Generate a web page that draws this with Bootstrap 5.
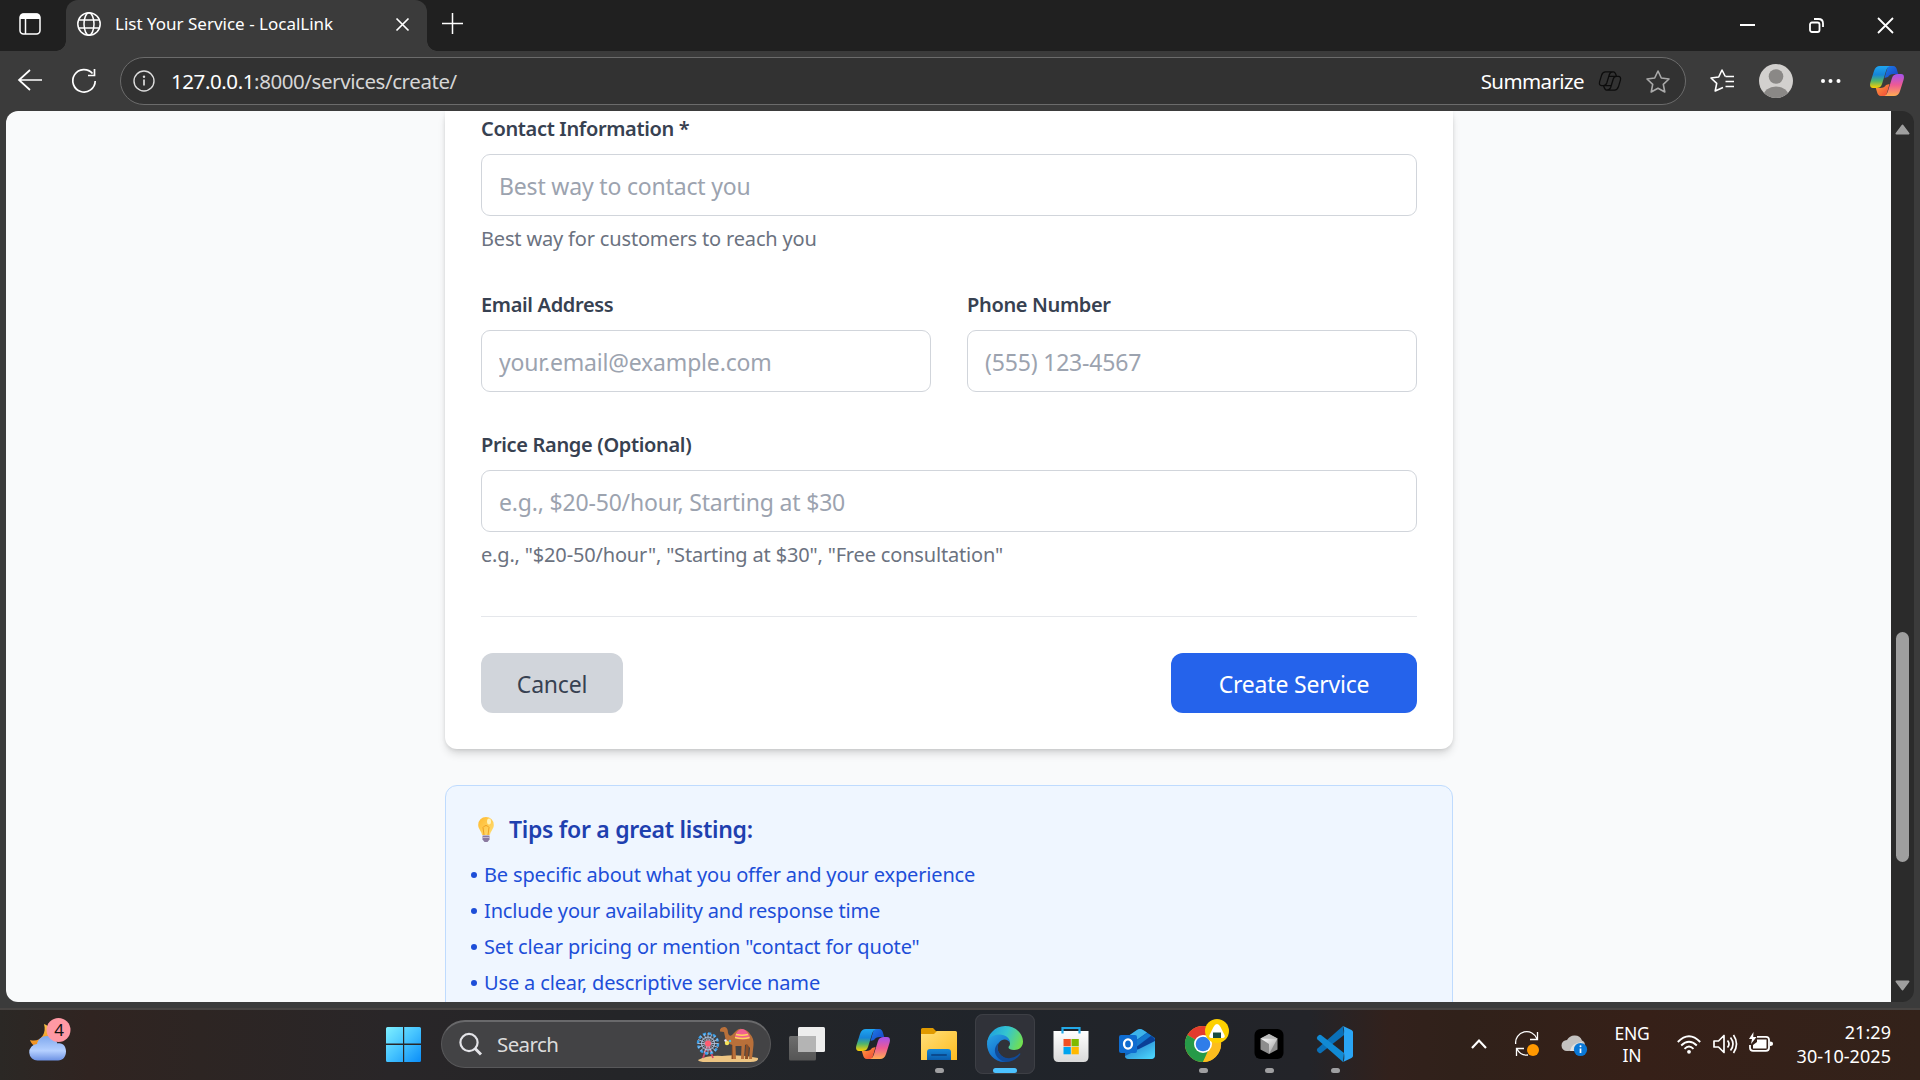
<!DOCTYPE html>
<html lang="en">
<head>
<meta charset="utf-8">
<title>List Your Service - LocalLink</title>
<link href="https://cdn.jsdelivr.net/npm/bootstrap@5.3.0/dist/css/bootstrap.min.css" rel="stylesheet">
<style>
body{width:1920px;height:1080px;overflow:hidden;background:#3b3b3b;font-family:"Noto Sans","Open Sans",sans-serif}
svg{display:block;flex:none;overflow:visible}
.tabstrip{height:51px;background:#202020;color:#fff}
.tabmenu{width:66px;padding:13px 0 0 19px}
.browser-tab{width:361px;height:51px;background:#3b3b3b;border-radius:12px 12px 0 0;padding:0 18px 3px 11px;position:relative}
.browser-tab::before,.browser-tab::after{content:"";position:absolute;bottom:0;width:10px;height:10px}
.browser-tab::before{left:-10px;background:radial-gradient(circle at 0 0,#202020 9.5px,#3b3b3b 10px)}
.browser-tab::after{right:-10px;background:radial-gradient(circle at 100% 0,#202020 9.5px,#3b3b3b 10px)}
.tabtitle{font-size:17px;margin-left:14px;letter-spacing:0;white-space:nowrap}
.toolbar{height:60px;color:#fff}
.urlbar{width:1566px;height:48px;margin:6px 0 0 24px;border:1px solid #6b6b6b;border-radius:24px;background:#323232;padding:0 15px 0 12px}
.urltext{font-size:20.5px;margin-left:16px;letter-spacing:-.42px;color:#d6d6d6}
.urltext b{font-weight:400;color:#fff}
.sumtext{font-size:20.5px;letter-spacing:-.6px}
.viewport{height:891px;margin:0 6px;border-radius:12px;overflow:hidden;background:#2b2b2b}
.page{width:1885px;height:891px;background:#f9fafb;overflow:hidden;padding-left:439px}
.formbox{width:1008px;background:#fff;border-radius:0 0 12px 12px;padding:1px 36px 36px;box-shadow:0 6px 9px -1.5px rgba(0,0,0,.12),0 3px 6px -3px rgba(0,0,0,.12),0 0 4px rgba(0,0,0,.06)}
.flabel{display:block;font-size:20px;line-height:34px;font-weight:600;color:#374151;margin:0 0 8px;letter-spacing:-.34px}
.finput.form-control{height:62px;font-size:23px;border:1px solid #d1d5db;border-radius:9px;padding:1px 17px 0 17px;letter-spacing:-.18px}
.finput::placeholder{color:#9ca3af}
.fhelp{font-size:20px;line-height:34px;color:#6b7280;margin-top:6px;letter-spacing:-.17px}
.gap-form{margin-bottom:32px}
.actions{border-top:1px solid #e5e7eb;padding-top:36px;margin-top:44px}
.actions .btn{height:60px;font-size:23px;border:0;border-radius:12px;padding:3px 0 0;letter-spacing:-.2px}
.b-cancel{width:142px;background:#d1d5db;color:#374151}
.b-create{width:246px;background:#2563eb;color:#fff}
.tips{width:1008px;height:300px;margin-top:36px;background:#eff6ff;border:1px solid #bfdbfe;border-radius:12px;padding:24px}
.tips h3{font-size:23px;line-height:38px;font-weight:600;color:#1e40af;margin:0 0 10px;letter-spacing:-.3px}
.tips li{font-size:20px;line-height:34px;margin-bottom:2px;color:#1d4ed8;letter-spacing:-.15px}
.tips li::before{content:"";display:inline-block;width:6px;height:6px;border-radius:50%;background:#1d4ed8;margin:0 7px 4px 1px}
.scrollcol{width:23px;padding:13px 0 11px}
.thumb{width:13px;height:230px;border-radius:7px;background:#9f9f9f;margin-top:497px}
.taskbar{height:72px;margin-top:6px;padding-bottom:2px;border-top:2px solid #484442;color:#fff;background:linear-gradient(90deg,#2b2825 0,#302421 90px,#2d2523 200px,#292628 390px,#242528 620px,#20242a 1000px,#232429 1310px,#32211c 1390px,#30211a 1460px,#362018 1640px,#33221a 1920px)}
.taskbar>*{flex:none}
.weather{width:60px;margin-left:18px}
.startbtn{width:60px;margin-left:295px}
.searchpill{width:330px;height:48px;margin:0 3px 0 8px;border-radius:24px;background:#434345;border:1px solid #58585a;border-top:2px solid #69696b;padding:0 10px 0 17px;color:#dcdcdc;font-size:20.5px;letter-spacing:-.6px}
.tile{width:60px;height:60px;margin:0 3px;border-radius:8px}
.tile.on{background:#303239;box-shadow:inset 0 0 0 1px #3d3f45}
.tray{font-size:17.5px;line-height:22px;letter-spacing:-.2px}
.clocktext{font-size:18px;line-height:24px;letter-spacing:.05px}
</style>
<script src="https://cdn.jsdelivr.net/npm/bootstrap@5.3.0/dist/js/bootstrap.bundle.min.js"></script>
</head>
<body class="d-flex flex-column">
<svg width="0" height="0" class="position-absolute">
<defs>
<linearGradient id="cpA" x1="0" y1="0" x2="0" y2="1"><stop offset="0" stop-color="#1fa5f0"/><stop offset=".4" stop-color="#1685d8"/><stop offset=".68" stop-color="#52b56a"/><stop offset="1" stop-color="#ffd000"/></linearGradient>
<linearGradient id="cpB" x1="0" y1="0" x2="1" y2="1"><stop offset="0" stop-color="#1b7fe8"/><stop offset="1" stop-color="#1a3fc4"/></linearGradient>
<linearGradient id="cpC" x1="0" y1="0" x2="0" y2="1"><stop offset="0" stop-color="#a552ee"/><stop offset=".5" stop-color="#ee5a94"/><stop offset="1" stop-color="#ffad52"/></linearGradient>
<linearGradient id="cpD" x1="0" y1="0" x2="1" y2="1"><stop offset="0" stop-color="#ffa03c"/><stop offset="1" stop-color="#f04438"/></linearGradient>
<symbol id="copilot" viewBox="0 0 34 30">
<path d="M18 0h5c2.500 0 3.500 2 4 4l1.200 4H24c-3 0-5 1-6 3l-3.500 1 2-7z" fill="url(#cpB)"/>
<path d="M16 30h-5c-2.500 0-3.500-2-4-4L5.800 22H10c3 0 5-1 6-3l3.500-1-2 7z" fill="url(#cpD)"/>
<path d="M10 0h11c-3 0-4 2-5 5l-4 13c-1 3-3 4-6 4H3c-3 0-3.500-2.500-2.500-6L4 5c1-3.500 3-5 6-5z" fill="url(#cpA)"/>
<path d="M24 30H13c3 0 4-2 5-5l4-13c1-3 3-4 6-4h3c3 0 3.500 2.500 2.500 6L30 25c-1 3.500-3 5-6 5z" fill="url(#cpC)"/>
</symbol>
<linearGradient id="wn" x1="0" y1="0" x2="1" y2="1"><stop offset="0" stop-color="#7ff0ff"/><stop offset=".5" stop-color="#45c3ff"/><stop offset="1" stop-color="#0a8df8"/></linearGradient>
<linearGradient id="cl" x1="0" y1="0" x2="0" y2="1"><stop offset="0" stop-color="#7fa8ee"/><stop offset=".6" stop-color="#b5d0ff"/><stop offset="1" stop-color="#6d92e4"/></linearGradient>
<linearGradient id="mn" x1="0" y1="0" x2="0" y2="1"><stop offset="0" stop-color="#f8c146"/><stop offset="1" stop-color="#f08a1c"/></linearGradient>
<linearGradient id="fo" x1="0" y1="0" x2="1" y2="1"><stop offset="0" stop-color="#ffe07a"/><stop offset="1" stop-color="#fdbb1f"/></linearGradient>
<linearGradient id="fb" x1="0" y1="0" x2="0" y2="1"><stop offset="0" stop-color="#1587d8"/><stop offset="1" stop-color="#0b5cab"/></linearGradient>
<linearGradient id="eg1" x1="0" y1=".3" x2="1" y2=".6"><stop offset="0" stop-color="#1d9ee0"/><stop offset=".5" stop-color="#35c5cf"/><stop offset="1" stop-color="#72e050"/></linearGradient>
<linearGradient id="eg2" x1="0" y1="0" x2=".6" y2="1"><stop offset="0" stop-color="#2aa5e4"/><stop offset="1" stop-color="#0d62c8"/></linearGradient>
<linearGradient id="tv" x1="0" y1="0" x2="0" y2="1"><stop offset="0" stop-color="#6d6d6d"/><stop offset="1" stop-color="#555"/></linearGradient>
<linearGradient id="st" x1="0" y1="0" x2="0" y2="1"><stop offset="0" stop-color="#fff"/><stop offset="1" stop-color="#d9d9d9"/></linearGradient>
<linearGradient id="ol" x1="0" y1="0" x2="1" y2="1"><stop offset="0" stop-color="#1c6fc4"/><stop offset="1" stop-color="#4fdcff"/></linearGradient>
<linearGradient id="cu" x1="0" y1="0" x2="1" y2="1"><stop offset="0" stop-color="#fff"/><stop offset="1" stop-color="#999"/></linearGradient>
<linearGradient id="bu" x1="0" y1="0" x2="1" y2="1"><stop offset="0" stop-color="#ffb92e"/><stop offset="1" stop-color="#ffdf75"/></linearGradient>
</defs>
</svg>

<!-- Tab strip -->
<div class="tabstrip d-flex flex-shrink-0">
  <div class="tabmenu"><svg width="22" height="22" viewBox="0 0 22 22"><rect x="1" y="1" width="20" height="20" rx="3.500" fill="none" stroke="#fff" stroke-width="1.500"/><path d="M1 6V4q0-3.500 3.500-3.500h13Q21 .5 21 4v2z" fill="#fff"/><path d="M6.500 6v15" stroke="#fff" stroke-width="1.500"/></svg></div>
  <div class="browser-tab d-flex align-items-center">
    <svg width="24" height="24" viewBox="0 0 24 24" fill="none" stroke="#fff" stroke-width="1.500"><circle cx="12" cy="12" r="11.200"/><ellipse cx="12" cy="12" rx="5" ry="11.200"/><path d="M1.600 8h20.800M1.600 16h20.800"/></svg>
    <span class="tabtitle">List Your Service - LocalLink</span>
    <svg class="ms-auto" width="13" height="13" viewBox="0 0 13 13"><path d="M.5.500l12 12M12.500.500l-12 12" stroke="#fff" stroke-width="1.700"/></svg>
  </div>
  <svg style="margin:13px 0 0 15px" width="21" height="21" viewBox="0 0 21 21"><path d="M10.500 0v21M0 10.500h21" stroke="#fff" stroke-width="1.500"/></svg>
  <div class="d-flex ms-auto" style="padding:18px 27px 0 0;gap:54px">
    <svg width="15" height="15"><path d="M0 7h15" stroke="#fff" stroke-width="2"/></svg>
    <svg width="15" height="15" viewBox="0 0 15 15" fill="none" stroke="#fff" stroke-width="1.800"><rect x="1" y="4.500" width="9.500" height="9.500" rx="2"/><path d="M5 1h4.500q4.500 0 4.500 4.500V9"/></svg>
    <svg width="15" height="15"><path d="M0 0l15 15M15 0L0 15" stroke="#fff" stroke-width="1.800"/></svg>
  </div>
</div>

<!-- Toolbar -->
<div class="toolbar d-flex flex-shrink-0">
  <svg style="margin:18px 0 0 18px" width="24" height="22" viewBox="0 0 24 22" fill="none" stroke="#fff" stroke-width="1.700"><path d="M24 11H1M12 1L1 11l11 10"/></svg>
  <svg style="margin:18px 0 0 30px" width="24" height="24" viewBox="0 0 24 24" fill="none" stroke="#fff" stroke-width="1.700"><path d="M20.500 4.500A11.200 11.200 0 1 0 23.200 12M22.500 0v6.500H16"/></svg>
  <div class="urlbar d-flex align-items-center">
    <svg width="22" height="22" viewBox="0 0 22 22"><circle cx="11" cy="11" r="10" fill="none" stroke="#ddd" stroke-width="1.400"/><path d="M11 9.500v6" stroke="#ddd" stroke-width="1.700"/><circle cx="11" cy="6.800" r="1.200" fill="#ddd"/></svg>
    <span class="urltext"><b>127.0.0.1</b>:8000/services/create/</span>
    <span class="sumtext ms-auto">Summarize</span>
    <svg style="margin:0 25px 0 15px" width="22" height="20" viewBox="0 0 34 30" fill="none" stroke="#0c0c0c" stroke-width="2"><path d="M22 1H10C6 1 5 3 4 6L1 16c-1 4 0 6 3 6h3c3 0 4-1 5-4l4-13c1-3 3-4 6-4 3 0 4 3 5 7M12 29h12c4 0 5-2 6-5l3-10c1-4 0-6-3-6h-3c-3 0-4 1-5 4l-4 13c-1 3-3 4-6 4-3 0-4-3-5-7M16 8h11M7 22h11"/></svg>
    <svg width="24" height="23" viewBox="0 0 24 23"><path d="M12 1l3.300 7 7.700 1-5.700 5.300L18.800 22 12 18.200 5.200 22l1.500-7.700L1 9l7.700-1z" fill="none" stroke="#a9a9a9" stroke-width="1.600" stroke-linejoin="round"/></svg>
  </div>
  <svg style="margin:18px 0 0 24px" width="24" height="23" viewBox="0 0 24 23" fill="none" stroke="#fff" stroke-width="1.600" stroke-linejoin="round"><path d="M13 18.500L5.200 22l1.500-7.700L1 9l7.700-1L12 1l3.300 6.500M15.500 7.500H24M15.500 12.500H24M15.500 17.500H24"/></svg>
  <svg style="margin:13px 0 0 25px" width="34" height="34" viewBox="0 0 34 34"><clipPath id="av"><circle cx="17" cy="17" r="17"/></clipPath><g clip-path="url(#av)"><path fill="#d2d0ce" d="M0 0h34v34H0z"/><circle cx="17" cy="12.500" r="7.300" fill="#8a8886"/><ellipse cx="17" cy="32" rx="12.500" ry="9.500" fill="#8a8886"/></g></svg>
  <svg style="margin:28px 0 0 27px" width="21" height="4"><g fill="#fff"><circle cx="3" cy="2" r="2"/><circle cx="10.500" cy="2" r="2"/><circle cx="18.500" cy="2" r="2"/></g></svg>
  <svg style="margin:15px 0 0 29px" width="34" height="30"><use href="#copilot"/></svg>
</div>

<!-- Page viewport -->
<div class="viewport d-flex flex-shrink-0">
  <main class="page">
    <form class="formbox">
      <div class="gap-form">
        <label class="flabel">Contact Information *</label>
        <input class="form-control finput" placeholder="Best way to contact you">
        <div class="fhelp">Best way for customers to reach you</div>
      </div>
      <div class="d-flex gap-form" style="gap:36px">
        <div class="flex-fill"><label class="flabel">Email Address</label><input class="form-control finput" placeholder="your.email@example.com"></div>
        <div class="flex-fill"><label class="flabel">Phone Number</label><input class="form-control finput" placeholder="(555) 123-4567"></div>
      </div>
      <div style="padding-top:4px">
        <label class="flabel">Price Range (Optional)</label>
        <input class="form-control finput" placeholder="e.g., $20-50/hour, Starting at $30">
        <div class="fhelp">e.g., "$20-50/hour", "Starting at $30", "Free consultation"</div>
      </div>
      <div class="actions d-flex justify-content-between">
        <button type="button" class="btn b-cancel">Cancel</button>
        <button type="button" class="btn b-create">Create Service</button>
      </div>
    </form>
    <section class="tips">
      <h3 class="d-flex"><svg style="margin:7px 15px 0 8px" width="16" height="25" viewBox="0 0 16 25"><path d="M8 0a7.800 7.800 0 0 1 7.800 8c0 4-3.300 6-3.800 10H4C3.500 14 .2 12 .2 8A7.800 7.800 0 0 1 8 0z" fill="url(#bu)"/><path d="M6 18L5 10.500q3-4 6 0L10 18" fill="none" stroke="#f0a020" stroke-width="1"/><ellipse cx="11" cy="4.500" rx="2" ry="3" fill="#fff3bd"/><path d="M4.500 18.500h7v4L9.500 25h-3l-2-2.500z" fill="#8b7aa0"/><path d="M4.500 20.500h7" stroke="#c4b8cf"/></svg>Tips for a great listing:</h3>
      <ul class="list-unstyled m-0">
        <li>Be specific about what you offer and your experience</li>
        <li>Include your availability and response time</li>
        <li>Set clear pricing or mention "contact for quote"</li>
        <li>Use a clear, descriptive service name</li>
      </ul>
    </section>
  </main>
  <div class="scrollcol d-flex flex-column align-items-center">
    <svg width="15" height="11"><path d="M7.500 1.500L13.500 9.500H1.500z" fill="#9f9f9f" stroke="#9f9f9f" stroke-width="2" stroke-linejoin="round"/></svg>
    <div class="thumb"></div>
    <svg class="mt-auto" width="15" height="11"><path d="M7.500 9.500L13.500 1.500H1.500z" fill="#9f9f9f" stroke="#9f9f9f" stroke-width="2" stroke-linejoin="round"/></svg>
  </div>
</div>

<!-- Taskbar -->
<div class="taskbar d-flex align-items-center flex-shrink-0">
  <div class="weather position-relative">
    <svg width="60" height="60" viewBox="0 0 60 60"><path d="M26 10c3 10-4 19-14 16 2 6 8 9 14 7 7-2 10-10 7-16-1-4-4-6-7-7z" fill="url(#mn)"/><path d="M20 46.500a8 8 0 0 1-1-16.500c1-5 5-8 10-8s9 3 10.500 7.500c6-1 8.500 3.500 8.500 8 0 5-3 9-8 9z" fill="url(#cl)"/><circle cx="40.500" cy="16" r="12" fill="#ff99a4"/><text x="41" y="22" font-size="17" text-anchor="middle" fill="#111">4</text></svg>
  </div>
  <div class="startbtn"><svg width="60" height="60" viewBox="0 0 60 60"><path d="M14.500 13H30v16.500H13V14.500q0-1.500 1.500-1.500zM31.200 13h15.300q1.500 0 1.500 1.500v15H31.200zM13 31h17v17H14.500q-1.500 0-1.500-1.500zM31.200 31H48v15.500q0 1.500-1.500 1.500H31.200z" fill="url(#wn)"/></svg></div>
  <div class="searchpill d-flex align-items-center">
    <svg width="23" height="23" viewBox="0 0 23 23" fill="none" stroke="#e4e4e8"><circle cx="10" cy="9.500" r="8.600" stroke-width="2.200"/><path d="M16 15.500l6 6" stroke-width="3"/></svg>
    <span style="margin-left:15px">Search</span>
    <svg class="ms-auto" width="64" height="38" viewBox="0 0 64 38">
      <path d="M2 34q10-5 24-4 18-2 36 2 1 4-8 4H10q-7 0-8-2z" fill="#eec583"/>
      <path d="M12 18L7 32M12 18l5 14" stroke="#d64b68" stroke-width="1.800"/>
      <circle cx="12" cy="17.500" r="10" fill="none" stroke="#3a9fe8" stroke-width="2.500" stroke-dasharray="3.200 2"/><circle cx="12" cy="17.500" r="6.500" fill="none" stroke="#9cc5e8"/>
      <path d="M12 7v21M1.500 17.500h21M4.500 10l15 15M19.500 10l-15 15M8 8l8 19M16 8L8 27M2 13.500l20 8M2 21.500l20-8" stroke="#c1c9e3" stroke-width=".8"/><circle cx="12" cy="17.500" r="3" fill="#ff5c70"/>
      <path d="M39 18l-.5 15h-3L36 18zM53 17l-1 16h-3l1-16z" fill="#8d4e26"/>
      <path d="M24 3.500Q25 .5 29 1q3 1 3 6 1 4 4 2 2-2 4-4 3-3 6-2 6 1 8 5 4 4 3.500 11L56 33h-3l1-11-3-4-2 1-1 14h-3l.5-13h-6L40 33h-3l-.5-14q-5-1-7-6L28 6l-4-.5z" fill="#b9703a"/>
      <path d="M39 12q0-5 4-8 3-2 6 0 4 3 5 8-7 3-15 0z" fill="#f0608f"/><path d="M40 8.500q6 1.500 12 0M39 11.500q8 2 14.500 0" fill="none" stroke="#ffd45c" stroke-width="1.400"/><circle cx="31" cy="17" r="2.200" fill="#f3e35a"/><circle cx="34" cy="15" r="1.200" fill="#4bc3df"/><circle cx="29.500" cy="14.500" r="1.200" fill="#f0e8ff"/>
    </svg>
  </div>
  <div class="tile"><svg width="60" height="60" viewBox="0 0 60 60"><rect x="12" y="22" width="27" height="24.500" rx="1.500" fill="url(#tv)"/><rect x="21" y="13" width="27" height="25" rx="1.500" fill="#ededed"/><path d="M21 22h18v16H21z" fill="#b4b4b4"/></svg></div>
  <div class="tile"><svg width="60" height="60"><use href="#copilot" x="13" y="15" width="34" height="30"/></svg></div>
  <div class="tile"><svg width="60" height="60" viewBox="0 0 60 60"><path d="M12 15.500q0-1.500 1.500-1.500H24l3 3h9v6H12z" fill="#e09a00"/><path d="M12 20h13l3-3h18.500q1.500 0 1.500 1.500V46H12z" fill="url(#fo)"/><path d="M18 46v-8q0-3 3-3h18q3 0 3 3v8z" fill="url(#fb)"/><path d="M23 41h14" stroke="#0a4a8e" stroke-width="2" stroke-linecap="round"/><rect x="26" y="54" width="9" height="5" rx="2.500" fill="#9f9fa1"/></svg></div>
  <div class="tile on"><svg width="60" height="60" viewBox="0 0 60 60"><path d="M12 30c0-9 8-18 18-18 11 0 18 8 18 15.500C48 33 44 36 39 36c-3 0-5.500-1-5.500-2.500S35 32 35 29.500c0-4-4-8-10-8-7 0-12 4-13 8.500z" fill="url(#eg1)"/><path d="M12 30c0-6 6-9.500 12-9.500 7 0 11 4 11 8.500-1-2-3-3.500-5.500-3.500-4 0-7 4-7 8 0 7 6 11 12 12L31 48c-11 1-19-8-19-18z" fill="url(#eg2)"/><path d="M25 28c-4 4-3 10 2 14 6 4 13 2 17.500-2.500.8-.8 1.200.3.500 1.300C41 46 36 48 31 48c-7-1-12-7-11-13 .5-3 2.500-6 5-7z" fill="#114b98"/><rect x="18" y="54" width="24" height="5" rx="2.500" fill="#4cc2ff"/></svg></div>
  <div class="tile"><svg width="60" height="60" viewBox="0 0 60 60"><path d="M12.500 17h35v26q0 5-5 5h-25q-5 0-5-5z" fill="url(#st)"/><path d="M21.500 19.500V14h17v5.500" fill="none" stroke="#23a9e8" stroke-width="2.200"/><path fill="#f25022" d="M22.500 25h7.300v7.300h-7.300z"/><path fill="#7fba00" d="M30.500 25h7.300v7.300h-7.300z"/><path fill="#00a4ef" d="M22.500 33h7.300v7.300h-7.300z"/><path fill="#ffb900" d="M30.500 33h7.300v7.300h-7.300z"/></svg></div>
  <div class="tile"><svg width="60" height="60" viewBox="0 0 60 60"><path d="M18 24l12-8q3-2 6 0l12 8v17q0 4-4 4H22q-4 0-4-4z" fill="#1064bc"/><path d="M20 23l10-7q3-2 6 0l4 2.500-17 12z" fill="#3db4ea"/><path d="M25 30l15-11 4 2.500L28 34z" fill="#1478cf"/><path d="M28 34l16-12q4 2.500 4 5L34 36z" fill="#0a3f96"/><path d="M18 42l30-15v14q0 4-4 4H22q-4 0-4-3z" fill="url(#ol)"/><rect x="12" y="21" width="18" height="18" rx="2" fill="#0f6cd0"/><ellipse cx="21" cy="30" rx="4" ry="4.700" fill="none" stroke="#fff" stroke-width="2.300"/></svg></div>
  <div class="tile"><svg width="60" height="60" viewBox="0 0 60 60"><circle cx="30" cy="30" r="18" fill="#fbbc1d"/><path d="M30 30L14.400 21a18 18 0 0 1 31.200 0z" fill="#e33b2e"/><path d="M30 30h8L30 48a18 18 0 0 1-15.600-27z" fill="#269a48"/><path d="M30 21h15.600A18 18 0 0 1 30 48l8-14z" fill="#fcbd1e"/><circle cx="30" cy="30" r="9" fill="#fff"/><circle cx="30" cy="30" r="7.300" fill="#2f7de9"/><circle cx="44" cy="17" r="12" fill="#fdd000"/><path d="M44 10q2 0 3.500 3l4 8q1 3-2 3h-11q-3 0-2-3l4-8Q42 10 44 10z" fill="#fff"/><path d="M40 18.500h8V24h-8z" fill="#174c43"/><rect x="26" y="54" width="9" height="5" rx="2.500" fill="#9f9fa1"/></svg></div>
  <div class="tile"><svg width="60" height="60" viewBox="0 0 60 60"><rect x="15.500" y="15" width="29" height="30" rx="6" fill="#000"/><path d="M30 20l8.500 4.500v11L30 40l-8.500-4.500v-11z" fill="#8d8d8d"/><path d="M21.500 24.500L30 20l8.500 4.500z" fill="#bbb"/><path d="M21.500 24.500h17L30 40v-10z" fill="url(#cu)"/><rect x="26" y="54" width="9" height="5" rx="2.500" fill="#9f9fa1"/></svg></div>
  <div class="tile"><svg width="60" height="60" viewBox="0 0 60 60"><path d="M12.500 34.500L38 12l1 9-23 18q-1 .6-2 0l-1.500-1.500q-1.500-1.500 0-3z" fill="#0a70b8"/><path d="M12.500 25.500L38 48l1-9-23-18q-1-.6-2 0l-1.500 1.500q-1.500 1.500 0 3z" fill="#118ad4"/><path d="M38 12l8.500 4q1.500.8 1.500 2v24q0 1.200-1.500 2L38 48q2-1 1-9.500V20q.500-6-1-8z" fill="#2aa5f5"/><rect x="26" y="54" width="9" height="5" rx="2.500" fill="#9f9fa1"/></svg></div>

  <div class="tray d-flex align-items-center" style="margin-left:103px">
    <svg width="16" height="10"><path d="M1 9l7-7.500L15 9" fill="none" stroke="#fff" stroke-width="2.200"/></svg>
    <svg style="margin-left:28px" width="24" height="26" viewBox="0 0 24 26" fill="none" stroke="#fff" stroke-width="1.300"><path d="M.700 13A11 11 0 0 1 22 8M22.500 1v7.500H15M13 24A11 11 0 0 1 2 18M1.500 25v-7.500H9"/><circle cx="18" cy="19" r="6" fill="#ff9800" stroke="none"/></svg>
    <svg style="margin:2px 0 0 24px" width="24" height="22" viewBox="0 0 24 22"><path d="M4 17a5.500 5.500 0 0 1 0-11Q7 1 12 1.500q5 0 7 5 3 1 3 5l-3 5z" fill="#c4c2c0"/><path d="M7 17q1-8 12-9l2 5-6 4z" fill="#e4e2df"/><circle cx="17.500" cy="15.500" r="6.600" fill="#0a78d7"/><path d="M17.500 14.500v4.500" stroke="#fff" stroke-width="1.700"/><circle cx="17.500" cy="12.200" r="1" fill="#fff"/></svg>
    <div class="text-center" style="width:40px;margin:0 0 0 25px">ENG<br>IN</div>
    <svg style="margin-left:25px" width="24" height="19" viewBox="0 0 24 19" fill="none" stroke="#fff" stroke-width="1.900"><path d="M.8 7Q12-4.500 23.200 7M4.200 10.500q7.800-7.500 15.600 0M7.500 13.800q4.500-4.500 9 0"/><circle cx="12" cy="16.800" r="1.900" fill="#fff" stroke="none"/></svg>
    <svg style="margin-left:12px" width="24" height="20" viewBox="0 0 24 20" fill="none" stroke="#fff" stroke-width="1.700"><path d="M1 7h4.500L11 1.500v17L5.500 13H1z" stroke-linejoin="round"/><path d="M14.500 6.500q3 3.500 0 7M17.500 3.500q5 6.500 0 13M20.500 1q6 9 0 18"/></svg>
    <svg style="margin:-4px 0 0 12px" width="24" height="20" viewBox="0 0 24 20"><path d="M8 4.800h9q3 0 3 3v8q0 3-3 3H4q-3 0-3-3V13" fill="none" stroke="#fff" stroke-width="1.800"/><path d="M8 7.500h9.500v9H4V13l4-3z" fill="#fff"/><path d="M21 9.500q3 0 3 2.300T21 14zM4.500 0L0 7h3l-1 5 5.500-7H4.200z" fill="#fff"/></svg>
    <div class="clocktext text-end" style="width:118px">21:29<br>30-10-2025</div>
  </div>
</div>
</body>
</html>
